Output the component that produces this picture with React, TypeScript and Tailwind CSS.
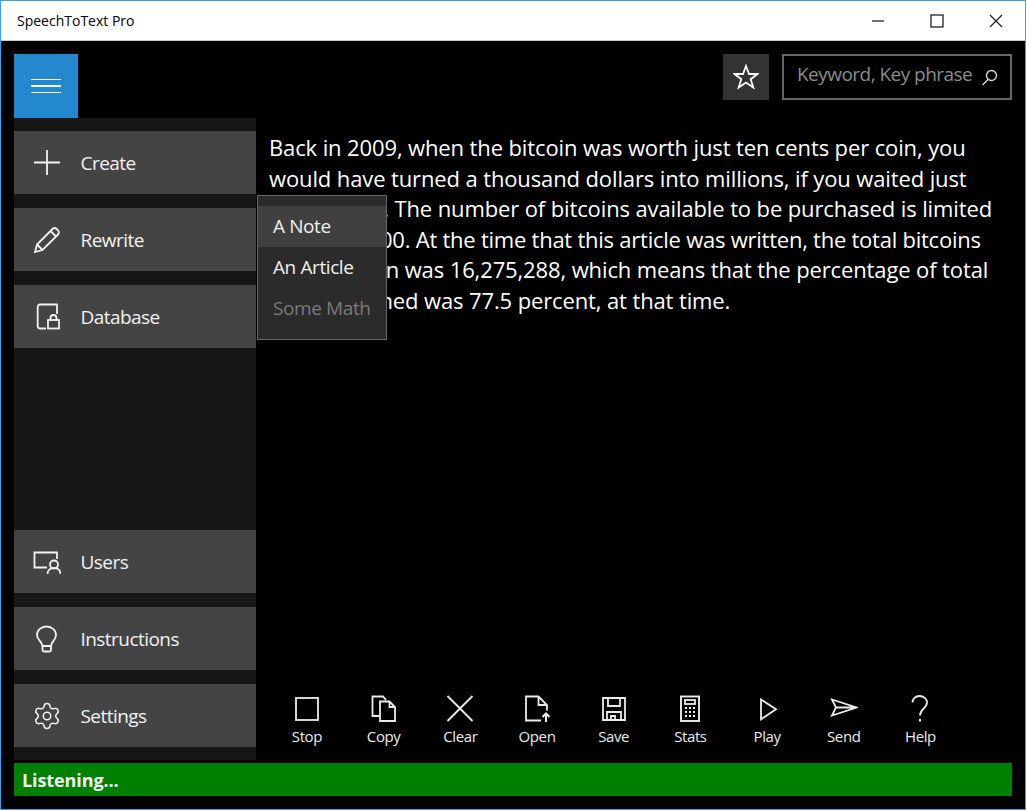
import type { ReactNode } from "react"
import { Settings } from "lucide-react"

const strokeProps = {
  fill: "none",
  stroke: "currentColor",
  strokeWidth: 1.8,
}

function Icon({ size = 28, children }: { size?: number; children: ReactNode }) {
  return (
    <svg width={size} height={size} viewBox="0 0 28 28" {...strokeProps}>
      {children}
    </svg>
  )
}

const PlusIcon = () => (
  <Icon>
    <path d="M14 1V26M1 13.500H27" />
  </Icon>
)
const PencilIcon = () => (
  <Icon>
    <path d="M2 26l2-7.500L19.500 3c1.200-1.200 3-1.200 4.200 0l1.300 1.300c1.200 1.200 1.200 3 0 4.200L9.500 24z M4 18.500l5.500 5.500 M17.500 5l5.500 5.500" />
  </Icon>
)
const DatabaseIcon = () => (
  <Icon>
    <path d="M13 25.500H7C5.500 25.500 4.700 24.500 4.700 23V4.500C4.700 2.500 5.500 1.500 7 1.500H24V11" />
    <rect x="15" y="17" width="11" height="8.500" />
    <path d="M17.500 17v-2c0-4 6-4 6 0V17" />
  </Icon>
)
const UsersIcon = () => (
  <Icon>
    <path d="M14 19.500H1.500V4.500H24V11" />
    <circle cx="21" cy="16.500" r="4" />
    <path d="M14.500 26c0-3.500 2.500-6 6.500-6s6.500 2.500 6.500 6" />
  </Icon>
)
const BulbIcon = () => (
  <Icon>
    <path d="M9.500 21c0-4-5.500-6-5.500-11C4 5 8.500 1.500 13.500 1.500S23 5 23 10C23 15 18 17 18 21z M9.500 21v4c0 1 .8 1.500 1.500 1.500h5.500c.8 0 1.500-.5 1.500-1.500V21" />
  </Icon>
)
const GearIcon = () => <Settings size={30} strokeWidth={1.2} className="-ml-[1px]" />

const StopIcon = () => (
  <Icon>
    <rect x="3" y="3" width="22" height="22" />
  </Icon>
)
const CopyIcon = () => (
  <Icon>
    <path d="M9 21H2.500V1.500H13L16 5M10 6.500H19.500L25 12V26H10z M19.500 6.500V12H25" />
  </Icon>
)
const ClearIcon = () => (
  <Icon>
    <path d="M1.500 1L26.500 26M26.500 1L1.500 26" />
  </Icon>
)
const OpenIcon = () => (
  <Icon>
    <path d="M18 25.500H3V1.500H15.500L24 10V15.500M15.500 1.500V10H24" />
    <path d="M23 27V19M19.500 22l3.500-3.500 3.500 3.500" strokeWidth={2} />
  </Icon>
)
const SaveIcon = () => (
  <Icon>
    <path d="M3 3H25V25H3z M8 3V11H20V3 M7 25V17H21V25 M11 25V21H15V25" />
  </Icon>
)
const StatsIcon = () => (
  <Icon>
    <rect x="5" y="1.500" width="18" height="24.500" strokeWidth={1.900} />
    <rect x="9" y="5" width="10" height="4" />
    <path d="M9 13h2M13 13h2M17 13h2M9 17h2M13 17h2M17 17h2M9 21h2M13 21h2M17 21h2" strokeWidth={2} />
  </Icon>
)
const PlayIcon = () => (
  <Icon>
    <path d="M8 4.500L23 14.300L8 24.300z" />
  </Icon>
)
const SendIcon = () => (
  <Icon>
    <path d="M2 4.500L26.500 12.500L2 20.500L6 12.500z M6 12.500H26.500" />
  </Icon>
)
const HelpIcon = () => (
  <Icon>
    <path d="M6.500 7.500c0-3.700 3-6.500 7-6.500s7.500 3 7.500 6.500c0 6-7 6.500-7 13" />
    <path d="M14 24v2.500" strokeWidth={2} />
  </Icon>
)

function SideButton({ icon, label }: { icon: ReactNode; label: string }) {
  return (
    <button className="flex h-[63px] w-full items-center bg-[#444444] pl-[19px] text-[#f2f2f2]">
      <span className="flex w-[47.500px]">{icon}</span>
      <span className="pt-[2px] text-[19px] tracking-[-0.55px]">{label}</span>
    </button>
  )
}

function ToolButton({ icon, label }: { icon: ReactNode; label: string }) {
  return (
    <button className="flex w-[76.700px] flex-col items-center text-[#ececec]">
      {icon}
      <span className="mt-[2px] text-[15px] leading-[22px] tracking-[-0.4px]">{label}</span>
    </button>
  )
}

export default function App() {
  return (
    <div
      className="flex h-[810px] w-[1026px] flex-col overflow-hidden border border-[#3f9fdc] bg-black"
      style={{ fontFamily: '"Open Sans", "Noto Sans", sans-serif' }}
    >
      {/* Title bar */}
      <div className="flex h-[40px] shrink-0 items-center justify-between border-b border-[#c8c8c8] bg-white pl-[16px] text-black">
        <span className="text-[14px]">SpeechToText Pro</span>
        <div className="flex items-center text-[#222]">
          <div className="flex w-[59px] justify-center">
            <svg width="14" height="14" viewBox="0 0 14 14" fill="none" stroke="currentColor" strokeWidth="1.300">
              <path d="M1 7H13" />
            </svg>
          </div>
          <div className="flex w-[59px] justify-center">
            <svg width="14" height="14" viewBox="0 0 14 14" fill="none" stroke="currentColor" strokeWidth="1.300">
              <rect x="1" y="1" width="12" height="12" />
            </svg>
          </div>
          <div className="flex w-[59px] justify-center">
            <svg width="14" height="14" viewBox="0 0 14 14" fill="none" stroke="currentColor" strokeWidth="1.300">
              <path d="M1 1L13 13M13 1L1 13" />
            </svg>
          </div>
        </div>
      </div>

      <div className="flex min-h-0 flex-1 flex-col px-[13px] pt-[13px]">
        <div className="flex h-[706px] shrink-0">
          {/* Left column */}
          <div className="flex w-[242px] shrink-0 flex-col">
            <button className="flex h-[64px] w-[64px] shrink-0 flex-col items-center justify-center gap-[5px] bg-[#2488cf]">
              <span className="h-[1.500px] w-[30px] bg-white" />
              <span className="h-[1.500px] w-[30px] bg-white" />
              <span className="h-[1.500px] w-[30px] bg-white" />
            </button>
            <div className="flex flex-1 flex-col justify-between bg-[#171717] py-[13px]">
              <div className="flex flex-col gap-[14px]">
                <SideButton icon={<PlusIcon />} label="Create" />
                <SideButton icon={<PencilIcon />} label="Rewrite" />
                <SideButton icon={<DatabaseIcon />} label="Database" />
              </div>
              <div className="flex flex-col gap-[14px]">
                <SideButton icon={<UsersIcon />} label="Users" />
                <SideButton icon={<BulbIcon />} label="Instructions" />
                <SideButton icon={<GearIcon />} label="Settings" />
              </div>
            </div>
          </div>

          {/* Right column */}
          <div className="relative flex min-w-0 flex-1 flex-col">
            <div className="flex justify-end gap-[13px]">
              <button className="flex h-[46px] w-[46px] items-center justify-center bg-[#333333] text-white">
                <svg width="26" height="26" viewBox="0 0 26 26" fill="none" stroke="currentColor" strokeWidth="1.800">
                  <path d="M13 2l3 8h8.500l-6.800 5.200 2.600 8.300L13 18.500l-7.300 5 2.600-8.300L1.500 10H10z" />
                </svg>
              </button>
              <div className="flex h-[46px] w-[230px] items-center justify-between border-2 border-[#666666] pl-[13px] pr-[12px] text-[#8c8c8c]">
                <span className="pb-[6px] text-[19px] tracking-[-0.53px]">Keyword, Key phrase</span>
                <svg width="17" height="17" viewBox="0 0 17 17" fill="none" stroke="#d8d8d8" strokeWidth="1.400">
                  <circle cx="10.500" cy="6.500" r="5" />
                  <path d="M7 10.500L1.500 16" />
                </svg>
              </div>
            </div>

            <p className="mt-[32px] whitespace-nowrap pl-[13px] text-[22px] leading-[30.600px] tracking-[-0.12px] text-white">
              Back in 2009, when the bitcoin was worth just ten cents per coin, you
              <br />
              would have turned a thousand dollars into millions, if you waited just
              <br />
              a few years. The number of bitcoins available to be purchased is limited
              <br />
              <span className="tracking-[-0.24px]">to 21,000,000. At the time that this article was written, the total bitcoins</span>
              <br />
              in circulation was 16,275,288, which means that the percentage of total
              <br />
              bitcoins mined was 77.5 percent, at that time.
            </p>

            <div className="mt-auto flex pb-[13px] pl-[12.600px]">
              <ToolButton icon={<StopIcon />} label="Stop" />
              <ToolButton icon={<CopyIcon />} label="Copy" />
              <ToolButton icon={<ClearIcon />} label="Clear" />
              <ToolButton icon={<OpenIcon />} label="Open" />
              <ToolButton icon={<SaveIcon />} label="Save" />
              <ToolButton icon={<StatsIcon />} label="Stats" />
              <ToolButton icon={<PlayIcon />} label="Play" />
              <ToolButton icon={<SendIcon />} label="Send" />
              <ToolButton icon={<HelpIcon />} label="Help" />
            </div>

            {/* Flyout menu */}
            <div className="absolute left-[1px] top-[141px] flex h-[145px] w-[130px] flex-col border border-[#666666] bg-[#2b2b2b] pt-[10px] text-[#f0f0f0]">
              <div className="flex h-[41px] items-center bg-[#404040] pl-[15px] text-[19px] tracking-[-0.4px]">A Note</div>
              <div className="flex h-[41px] items-center pl-[15px] text-[19px] tracking-[-0.4px]">An Article</div>
              <div className="flex h-[41px] items-center pl-[15px] text-[19px] tracking-[-0.4px] text-[#7a7a7a]">Some Math</div>
            </div>
          </div>
        </div>

        {/* Status bar */}
        <div className="mt-[3px] flex h-[33px] items-center bg-[#008000] pl-[8px] pt-[2px] text-[18px] font-bold tracking-[-0.1px] text-[#f2f2f2]">
          Listening...
        </div>
      </div>
    </div>
  )
}
